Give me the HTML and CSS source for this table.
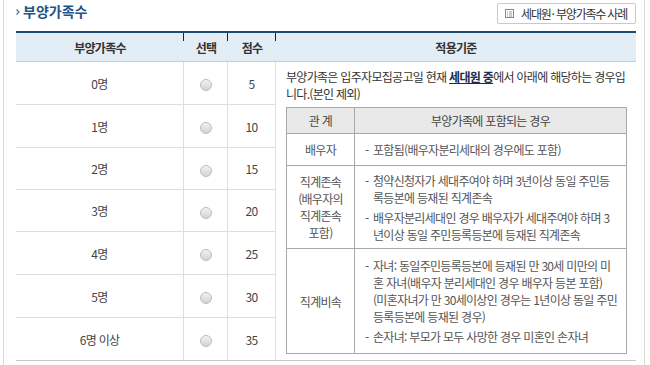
FILE: index.html
```
<!DOCTYPE html>
<html lang="ko">
<head>
<meta charset="utf-8">
<title>부양가족수</title>
<link rel="stylesheet" href="styles.css">
</head>
<body>
<div class="page">
  <div class="top">
    <h2 class="title"><svg class="bullet" width="4" height="6" viewBox="0 0 4 6"><path d="M0.5 0.5 L3 3 L0.5 5.5" fill="none" stroke="#4a6f96" stroke-width="1.2"/></svg>부양가족수</h2>
    <button class="btn" type="button"><svg class="ico" width="9" height="9" viewBox="0 0 9 9"><rect x="0.5" y="0.5" width="8" height="8" fill="none" stroke="#888"/><path d="M2 3h1M4 3h3M2 5h1M4 5h3M2 7h1M4 7h3" stroke="#999" stroke-width="1"/></svg><span>세대원<span class="dot">·</span>부양가족수 사례</span></button>
  </div>
  <table class="score">
    <colgroup><col class="c1"><col class="c2"><col class="c3"><col class="c4"></colgroup>
    <thead>
      <tr class="head"><th>부양가족수</th><th>선택</th><th>점수</th><th>적용기준</th></tr>
    </thead>
    <tbody>
      <tr class="h43"><td>0명</td><td><span class="radio"></span></td><td>5</td>
        <td rowspan="7" class="criteria">
          <p class="intro">부양가족은 입주자모집공고일 현재 <strong class="em">세대원 중</strong>에서 아래에 해당하는 경우입<br>니다.(본인 제외)</p>
          <table class="rel">
            <colgroup><col class="k1"><col class="k2"></colgroup>
            <thead><tr class="rhead"><th>관 계</th><th>부양가족에 포함되는 경우</th></tr></thead>
            <tbody>
              <tr class="r1"><td class="lab">배우자</td><td><ul class="list"><li><span class="dash">-</span><span>포함됨(배우자분리세대의 경우에도 포함)</span></li></ul></td></tr>
              <tr class="r2"><td class="lab">직계존속<br>(배우자의<br>직계존속<br>포함)</td><td><ul class="list"><li><span class="dash">-</span><span>청약신청자가 세대주여야 하며 3년이상 동일 주민등<br>록등본에 등재된 직계존속</span></li><li><span class="dash">-</span><span>배우자분리세대인 경우 배우자가 세대주여야 하며 3<br>년이상 동일 주민등록등본에 등재된 직계존속</span></li></ul></td></tr>
              <tr class="r3"><td class="lab">직계비속</td><td><ul class="list"><li><span class="dash">-</span><span>자녀: 동일주민등록등본에 등재된 만 30세 미만의 미<br>혼 자녀(배우자 분리세대인 경우 배우자 등본 포함)<br>(미혼자녀가 만 30세이상인 경우는 1년이상 동일 주민<br>등록등본에 등재된 경우)</span></li><li><span class="dash">-</span><span>손자녀: 부모가 모두 사망한 경우 미혼인 손자녀</span></li></ul></td></tr>
            </tbody>
          </table>
        </td>
      </tr>
      <tr class="h43"><td>1명</td><td><span class="radio"></span></td><td>10</td></tr>
      <tr class="h42"><td>2명</td><td><span class="radio"></span></td><td>15</td></tr>
      <tr class="h42"><td>3명</td><td><span class="radio"></span></td><td>20</td></tr>
      <tr class="h43"><td>4명</td><td><span class="radio"></span></td><td>25</td></tr>
      <tr class="h43"><td>5명</td><td><span class="radio"></span></td><td>30</td></tr>
      <tr class="h42"><td>6명 이상</td><td><span class="radio"></span></td><td>35</td></tr>
    </tbody>
  </table>
</div>
</body>
</html>
```
FILE: styles.css
```
* { box-sizing: border-box; }
html, body { margin: 0; padding: 0; background: #fff; }
body {
  font-family: "Noto Sans CJK KR", "Noto Sans", sans-serif;
  font-size: 12px;
  color: #444;
  letter-spacing: -0.7px;
}
.page {
  margin: 0 3px;
  width: 642px;
  min-height: 365px;
  border-left: 1px solid #d9d9d9;
  border-right: 1px solid #d9d9d9;
  padding: 0 8px 0 12px;
}
.top {
  display: flex;
  justify-content: space-between;
  align-items: flex-start;
  height: 31px;
  padding-top: 3px;
}
.title {
  margin: 0;
  display: flex;
  align-items: center;
  gap: 3px;
  font-size: 14px;
  line-height: 17px;
  font-weight: bold;
  color: #1f5586;
  letter-spacing: 0;
}
.bullet { display: block; }
.btn {
  display: flex;
  align-items: center;
  gap: 7px;
  height: 21px;
  padding: 0 8px 0 7px;
  border: 1px solid #c9c9c9;
  border-radius: 2px;
  background: #fff;
  font-family: inherit;
  font-size: 12px;
  color: #333;
  letter-spacing: -1.2px;
}
.dot { letter-spacing: 0; margin: 0 1px; }
.ico { display: block; }
.score {
  width: 620px;
  table-layout: fixed;
  border-collapse: separate;
  border-spacing: 0;
  border-top: 2px solid #1d4a72;
  border-bottom: 1px solid #c8c8c8;
}
.c1 { width: 168px; }
.c2 { width: 44px; }
.c3 { width: 48px; }
.c4 { width: 360px; }
.score > thead th {
  position: relative;
  background: #e2edf6;
  border-bottom: 1px solid #c9ced3;
  font-weight: bold;
  color: #333;
  padding: 0;
  text-align: center;
}
.score > thead th:not(:last-child)::after {
  content: "";
  position: absolute;
  right: 0;
  top: 0;
  width: 1px;
  height: 8px;
  background: #222;
}
.head { height: 29px; }
.score > tbody > tr > td {
  text-align: center;
  border-right: 1px solid #dedede;
  padding: 0;
}
.score > tbody > tr:not(:last-child) > td { border-bottom: 1px solid #dedede; }
.h43 { height: 43px; }
.h42 { height: 42px; }
.radio {
  display: inline-block;
  width: 12px;
  height: 12px;
  border-radius: 50%;
  border: 1px solid #bdbdbd;
  background: linear-gradient(#f2f2f2, #d3d3d3);
  vertical-align: middle;
}
.score > tbody > tr > td.criteria {
  vertical-align: top;
  text-align: left;
  border-right: none;
  border-bottom: none;
  padding: 6px 9px 0 10px;
  color: #333;
}
.intro {
  margin: 0;
  line-height: 17px;
  white-space: nowrap;
}
.em {
  color: #1b2b52;
  text-decoration: underline;
}
.rel {
  width: 100%;
  margin-top: 5px;
  border-collapse: collapse;
  table-layout: fixed;
  color: #555;
}
.k1 { width: 68px; }
.rel th, .rel td {
  border: 1px solid #a9a9a9;
  padding: 0;
  line-height: 17px;
}
.rel th {
  background: #e9e9e9;
  font-weight: normal;
  color: #444;
  text-align: center;
}
.rhead { height: 26px; }
.r1 { height: 32px; }
.r2 { height: 83px; }
.r3 { height: 105px; }
.rel td.lab { text-align: center; }
.list {
  list-style: none;
  margin: 0;
  padding: 0 0 0 10px;
  white-space: nowrap;
}
.list li { display: flex; }
.list li + li { margin-top: 3px; }
.dash { width: 8px; flex: none; }
```
